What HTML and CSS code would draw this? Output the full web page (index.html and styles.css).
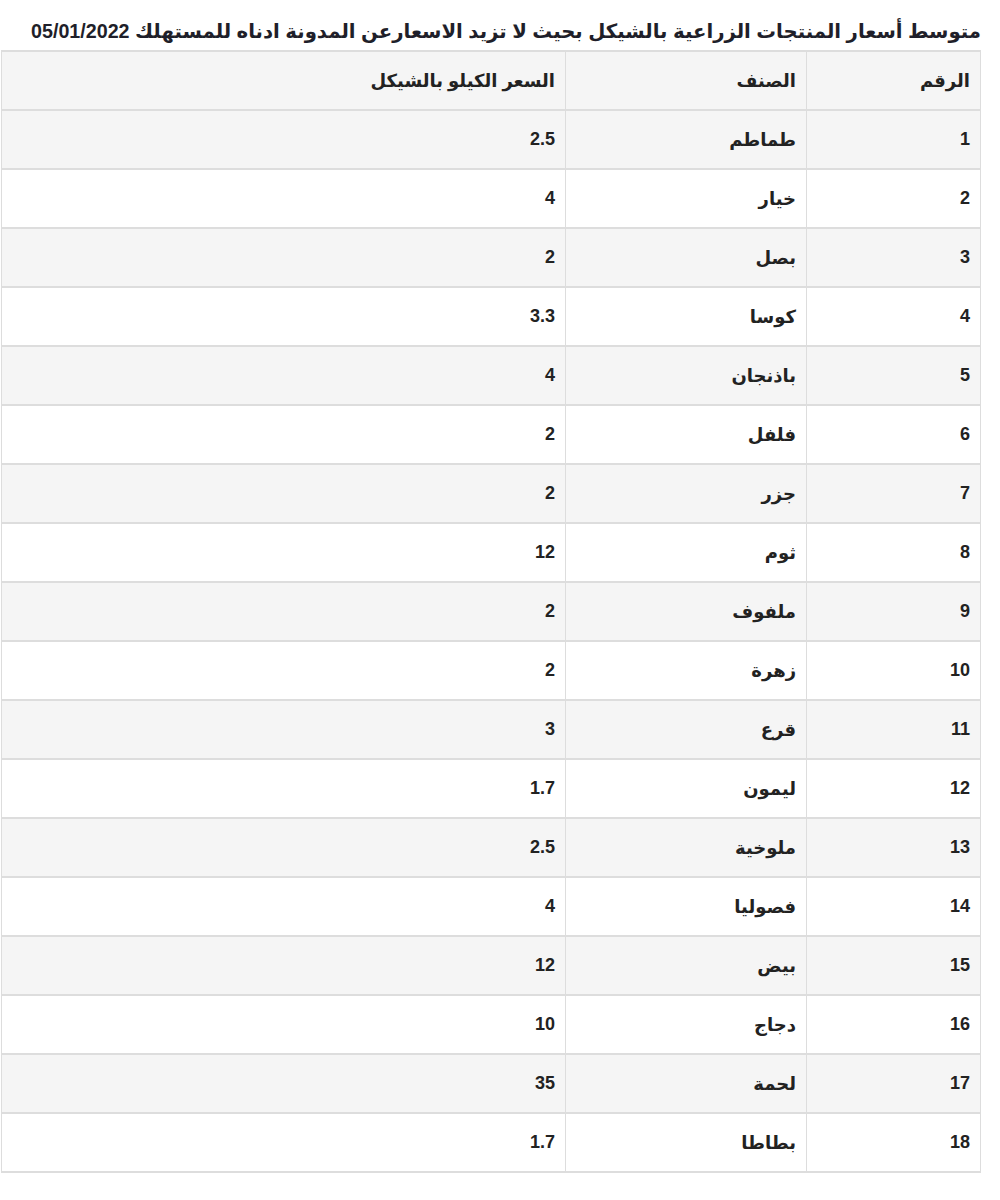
FILE: index.html
```html
<!DOCTYPE html>
<html lang="ar" dir="rtl">
<head>
<meta charset="utf-8">
<title>أسعار المنتجات الزراعية</title>
<link rel="stylesheet" href="styles.css">
</head>
<body>
<div class="page">
  <h1 class="title">متوسط أسعار المنتجات الزراعية بالشيكل بحيث لا تزيد الاسعارعن المدونة ادناه للمستهلك 05/01/2022</h1>
  <table class="prices">
    <colgroup>
      <col class="c-num">
      <col class="c-kind">
      <col class="c-price">
    </colgroup>
    <thead>
      <tr><th>الرقم</th><th>الصنف</th><th>السعر الكيلو بالشيكل</th></tr>
    </thead>
    <tbody>
      <tr><td>1</td><td>طماطم</td><td>2.5</td></tr>
      <tr><td>2</td><td>خيار</td><td>4</td></tr>
      <tr><td>3</td><td>بصل</td><td>2</td></tr>
      <tr><td>4</td><td>كوسا</td><td>3.3</td></tr>
      <tr><td>5</td><td>باذنجان</td><td>4</td></tr>
      <tr><td>6</td><td>فلفل</td><td>2</td></tr>
      <tr><td>7</td><td>جزر</td><td>2</td></tr>
      <tr><td>8</td><td>ثوم</td><td>12</td></tr>
      <tr><td>9</td><td>ملفوف</td><td>2</td></tr>
      <tr><td>10</td><td>زهرة</td><td>2</td></tr>
      <tr><td>11</td><td>قرع</td><td>3</td></tr>
      <tr><td>12</td><td>ليمون</td><td>1.7</td></tr>
      <tr><td>13</td><td>ملوخية</td><td>2.5</td></tr>
      <tr><td>14</td><td>فصوليا</td><td>4</td></tr>
      <tr><td>15</td><td>بيض</td><td>12</td></tr>
      <tr><td>16</td><td>دجاج</td><td>10</td></tr>
      <tr><td>17</td><td>لحمة</td><td>35</td></tr>
      <tr><td>18</td><td>بطاطا</td><td>1.7</td></tr>
    </tbody>
  </table>
</div>
</body>
</html>
```

FILE: styles.css
```css
html, body {
  margin: 0;
  padding: 0;
  background: #ffffff;
}

.page {
  width: 979px;
  margin: 0 19px 0 0;
  padding-top: 18px;
  font-family: "Liberation Sans", "DejaVu Sans", Arial, sans-serif;
  color: #222222;
}

.title {
  margin: 0 0 6px 0;
  padding: 0;
  font-size: 19.7px;
  line-height: 26px;
  font-weight: bold;
  color: #1f1f2a;
  text-align: right;
  white-space: nowrap;
}

.prices {
  width: 979px;
  border-collapse: collapse;
  table-layout: fixed;
}

.c-num { width: 174px; }
.c-kind { width: 241px; }
.c-price { width: 564px; }

.prices th,
.prices td {
  height: 57px;
  padding: 0 10px;
  text-align: right;
  vertical-align: middle;
  font-size: 18px;
  font-weight: bold;
  color: #222222;
  border-left: 1px solid #dddddd;
  border-right: 1px solid #dddddd;
  border-top: 2px solid #dddddd;
  border-bottom: 2px solid #dddddd;
}

.prices thead tr,
.prices tbody tr:nth-child(odd) {
  background: #f5f5f5;
}

.prices tbody tr:nth-child(even) {
  background: #ffffff;
}
```
